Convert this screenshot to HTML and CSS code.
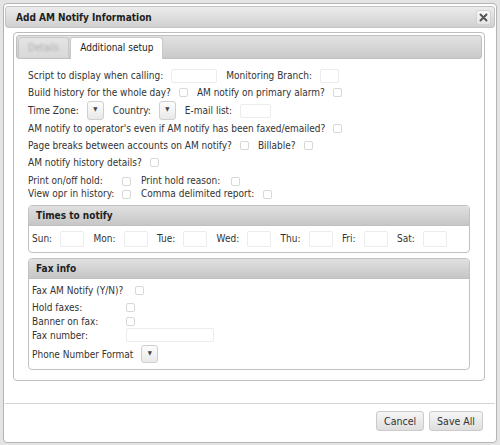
FILE: index.html
```html
<!DOCTYPE html>
<html lang="en">
<head>
    <meta charset="UTF-8">
    <title>Add AM Notify Information</title>
    <link rel="stylesheet" href="styles.css">
</head>
<body>
    <div class="dialog">
        <div class="titlebar">
            <span class="title">Add AM Notify Information</span>
            <button class="close" title="Close">
                <svg width="9" height="9" viewBox="0 0 9 9"><path d="M1.5 1.5 L7.5 7.5 M7.5 1.5 L1.5 7.5" stroke="#555" stroke-width="2" stroke-linecap="round"/></svg>
            </button>
        </div>

        <div class="content">
            <div class="tabs">
                <ul class="tab-nav">
                    <li class="tab disabled"><span>Details</span></li>
                    <li class="tab active">Additional setup</li>
                </ul>

                <div class="panel">
                    <div class="row">
                        <label>Script to display when calling:</label>
                        <input class="text w45" type="text">
                        <label>Monitoring Branch:</label>
                        <input class="text w18" type="text">
                    </div>
                    <div class="row">
                        <label>Build history for the whole day?</label>
                        <span class="check"></span>
                        <label>AM notify on primary alarm?</label>
                        <span class="check"></span>
                    </div>
                    <div class="row tall">
                        <label>Time Zone:</label>
                        <span class="select">&#9660;</span>
                        <label>Country:</label>
                        <span class="select">&#9660;</span>
                        <label>E-mail list:</label>
                        <input class="text w30" type="text">
                    </div>
                    <div class="row">
                        <label>AM notify to operator's even if AM notify has been faxed/emailed?</label>
                        <span class="check"></span>
                    </div>
                    <div class="row">
                        <label>Page breaks between accounts on AM notify?</label>
                        <span class="check"></span>
                        <label>Billable?</label>
                        <span class="check"></span>
                    </div>
                    <div class="row">
                        <label>AM notify history details?</label>
                        <span class="check"></span>
                    </div>

                    <table class="grid opts">
                        <tr>
                            <td class="c1">Print on/off hold:</td>
                            <td class="c2"><span class="check"></span></td>
                            <td>Print hold reason:<span class="check wide"></span></td>
                        </tr>
                        <tr>
                            <td class="c1">View opr in history:</td>
                            <td class="c2"><span class="check"></span></td>
                            <td>Comma delimited report:<span class="check"></span></td>
                        </tr>
                    </table>

                    <div class="box times">
                        <div class="box-head">Times to notify</div>
                        <div class="box-body days">
                            <label>Sun:</label><input class="text day" type="text">
                            <label>Mon:</label><input class="text day" type="text">
                            <label>Tue:</label><input class="text day" type="text">
                            <label>Wed:</label><input class="text day" type="text">
                            <label>Thu:</label><input class="text day" type="text">
                            <label>Fri:</label><input class="text day" type="text">
                            <label>Sat:</label><input class="text day" type="text">
                        </div>
                    </div>

                    <div class="box fax">
                        <div class="box-head">Fax info</div>
                        <div class="box-body">
                            <div class="row first">
                                <label>Fax AM Notify (Y/N)?</label>
                                <span class="check"></span>
                            </div>
                            <table class="grid fax-grid">
                                <tr>
                                    <td class="f1">Hold faxes:</td>
                                    <td><span class="check"></span></td>
                                </tr>
                                <tr>
                                    <td class="f1">Banner on fax:</td>
                                    <td><span class="check"></span></td>
                                </tr>
                                <tr>
                                    <td class="f1">Fax number:</td>
                                    <td><input class="text w88" type="text"></td>
                                </tr>
                            </table>
                            <div class="row phone">
                                <label>Phone Number Format</label>
                                <span class="select">&#9660;</span>
                            </div>
                        </div>
                    </div>
                </div>
            </div>
        </div>

        <div class="buttonpane">
            <button class="btn">Cancel</button>
            <button class="btn">Save All</button>
        </div>
    </div>
</body>
</html>
```

FILE: styles.css
```css
body {
    margin: 0;
    padding: 0;
    background-color: #e4e4e4;
    font-family: 'DejaVu Sans Condensed', 'Liberation Sans', sans-serif;
    font-size: 10px;
    color: #333;
}

.dialog {
    margin: 3px;
    width: 494px;
    height: 440px;
    box-sizing: border-box;
    padding: 1px;
    background: #fff;
    border: 1px solid #b4b4b4;
    border-radius: 4px;
    display: flex;
    flex-direction: column;
}

/* title bar */
.titlebar {
    height: 20px;
    margin-top: 1px;
    display: flex;
    align-items: center;
    justify-content: space-between;
    padding: 0 3px 0 10px;
    background: linear-gradient(#ececec, #d0d0d0);
    border: 1px solid #c4c4c4;
    border-radius: 3px;
}

.title {
    font-weight: bold;
    color: #1e1e1e;
}

.close {
    width: 15px;
    height: 15px;
    padding: 0;
    display: flex;
    align-items: center;
    justify-content: center;
    background: linear-gradient(#fafafa, #e6e6e6);
    border: 1px solid #d2d2d2;
    border-radius: 3px;
}

/* tabs */
.content {
    flex: 1;
    padding: 4px 10px 0 8px;
}

.tabs {
    border: 1px solid #bdbdbd;
    border-radius: 4px;
    padding: 2px;
    height: 349px;
    box-sizing: border-box;
}

.tab-nav {
    list-style: none;
    margin: 0;
    padding: 2px 0 0 1px;
    height: 20px;
    display: flex;
    align-items: flex-end;
    background: linear-gradient(#e2e2e2, #c9c9c9);
    border: 1px solid #c0c0c0;
    border-radius: 3px;
}

.tab {
    height: 20px;
    line-height: 20px;
    padding: 0 9px;
    margin-right: 1px;
    border: 1px solid #c8c8c8;
    border-bottom: none;
    border-radius: 3px 3px 0 0;
}

.tab.disabled {
    background: linear-gradient(#e4e4e4, #d8d8d8);
    color: #b0b0b0;
}

.tab.disabled span {
    filter: blur(0.8px);
}

.tab.active {
    background: #fff;
    height: 21px;
    margin-bottom: -1px;
    color: #222;
}

.panel {
    padding: 8px 0 0 12px;
}

/* form rows */
.row {
    display: flex;
    align-items: center;
    height: 17px;
}

.row.tall {
    height: 19px;
}

.row label {
    margin-right: 8px;
    white-space: nowrap;
}

.row .check,
.row .text,
.row .select {
    margin-right: 9px;
}

.text {
    height: 14px;
    box-sizing: border-box;
    border: 1px solid #ececec;
    border-radius: 2px;
    background: #fff;
    padding: 0;
    margin: 0;
}

.w45 { width: 46px; }
.w18 { width: 19px; }
.w30 { width: 31px; }
.w88 { width: 88px; }

.check {
    display: inline-block;
    width: 9px;
    height: 9px;
    border: 1px solid #d8d8d8;
    border-radius: 2px;
    box-sizing: border-box;
    vertical-align: middle;
}

.select {
    display: inline-flex;
    justify-content: center;
    width: 17px;
    height: 19px;
    box-sizing: border-box;
    padding-top: 3px;
    font-size: 6px;
    color: #444;
    background: linear-gradient(#fdfdfd, #e9e9e9);
    border: 1px solid #cfcfcf;
    border-radius: 3px;
}

/* two column grids */
.grid {
    border-collapse: collapse;
    margin-top: 3px;
}

.grid td {
    padding: 0;
    height: 13px;
    white-space: nowrap;
}

.opts .c1 { width: 94px; }
.opts .c2 { width: 19px; }

.opts td .check {
    margin-left: 9px;
}

.opts .c2 .check {
    margin-left: 0;
}

.opts td .check.wide {
    margin-left: 11px;
}

/* boxes */
.box {
    width: 442px;
    box-sizing: border-box;
    border: 1px solid #c2c2c2;
    border-radius: 4px;
    margin-top: 5px;
}

.box-head {
    height: 19px;
    line-height: 19px;
    padding-left: 7px;
    font-weight: bold;
    color: #1e1e1e;
    background: linear-gradient(#e0e0e0, #c6c6c6);
    border-bottom: 1px solid #c0c0c0;
    border-radius: 3px 3px 0 0;
}

.box-body {
    padding: 4px 3px;
}

.days {
    display: flex;
    align-items: center;
    height: 17px;
    padding-bottom: 5px;
}

.days label {
    margin-right: 8px;
}

.days .day {
    width: 24px;
    height: 16px;
    margin-right: 9.4px;
}

.fax .box-body {
    padding: 3px 3px 6px;
}

.fax .row.first label {
    margin-right: 12px;
}

.fax-grid {
    margin-top: 1px;
}

.fax-grid td {
    height: 14px;
}

.fax-grid .f1 { width: 94px; }

.row.phone {
    height: 18px;
    margin-top: 3px;
}

.row.phone .select {
    height: 18px;
}

/* footer */
.buttonpane {
    border-top: 1px solid #d4d4d4;
    display: flex;
    justify-content: flex-end;
    padding: 7px 12px 0 0;
    height: 38px;
    box-sizing: border-box;
}

.btn {
    height: 20px;
    padding: 0 7px;
    margin-left: 5px;
    font-family: inherit;
    font-size: 10.5px;
    color: #333;
    background: linear-gradient(#f6f6f6, #dedede);
    border: 1px solid #cbcbcb;
    border-radius: 3px;
}
```
